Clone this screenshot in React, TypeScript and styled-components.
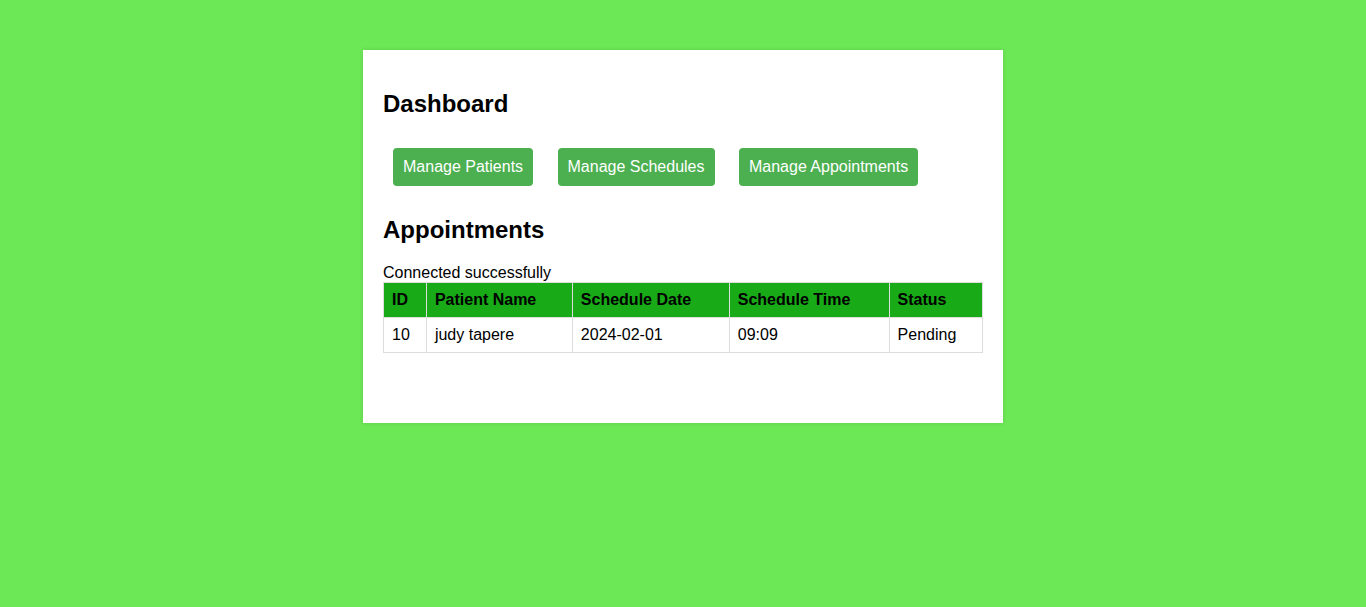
import React from "react";
import styled, { createGlobalStyle } from "styled-components";

const Global = createGlobalStyle`
  html, body { margin: 0; padding: 0; }
  body {
    background: #6ce756;
    font-family: "Liberation Sans", Arial, sans-serif;
    color: #000;
  }
`;

const Container = styled.div`
  width: 600px;
  margin: 50px auto;
  padding: 20px 20px 70px;
  background: #fff;
  box-shadow: 0 0 4px rgba(0, 0, 0, 0.12);
`;

const Heading = styled.h2`
  font-size: 24px;
  font-weight: bold;
  margin: 19.92px 0;
`;

const Nav = styled.div``;

const NavButton = styled.a`
  display: inline-block;
  margin: 10px;
  padding: 10px;
  background: #4caf50;
  color: #fff;
  font-size: 16px;
  line-height: 18px;
  border-radius: 4px;
  text-decoration: none;
`;

const Message = styled.div`
  font-size: 16px;
  line-height: 18px;
`;

const Table = styled.table`
  width: 100%;
  border-collapse: collapse;
  font-size: 16px;
`;

const Th = styled.th`
  background: #18aa17;
  color: #000;
  text-align: left;
  padding: 8px;
  border: 1px solid #ddd;
  line-height: 18px;
`;

const Td = styled.td`
  padding: 8px;
  border: 1px solid #ddd;
  line-height: 18px;
`;

export default function App() {
  return (
    <>
      <Global />
      <Container>
        <Heading>Dashboard</Heading>
        <Nav>
          <NavButton href="#">Manage Patients</NavButton>{" "}
          <NavButton href="#">Manage Schedules</NavButton>{" "}
          <NavButton href="#">Manage Appointments</NavButton>
        </Nav>
        <Heading>Appointments</Heading>
        <Message>Connected successfully</Message>
        <Table>
          <thead>
            <tr>
              <Th>ID</Th>
              <Th>Patient Name</Th>
              <Th>Schedule Date</Th>
              <Th>Schedule Time</Th>
              <Th>Status</Th>
            </tr>
          </thead>
          <tbody>
            <tr>
              <Td>10</Td>
              <Td>judy tapere</Td>
              <Td>2024-02-01</Td>
              <Td>09:09</Td>
              <Td>Pending</Td>
            </tr>
          </tbody>
        </Table>
      </Container>
    </>
  );
}
